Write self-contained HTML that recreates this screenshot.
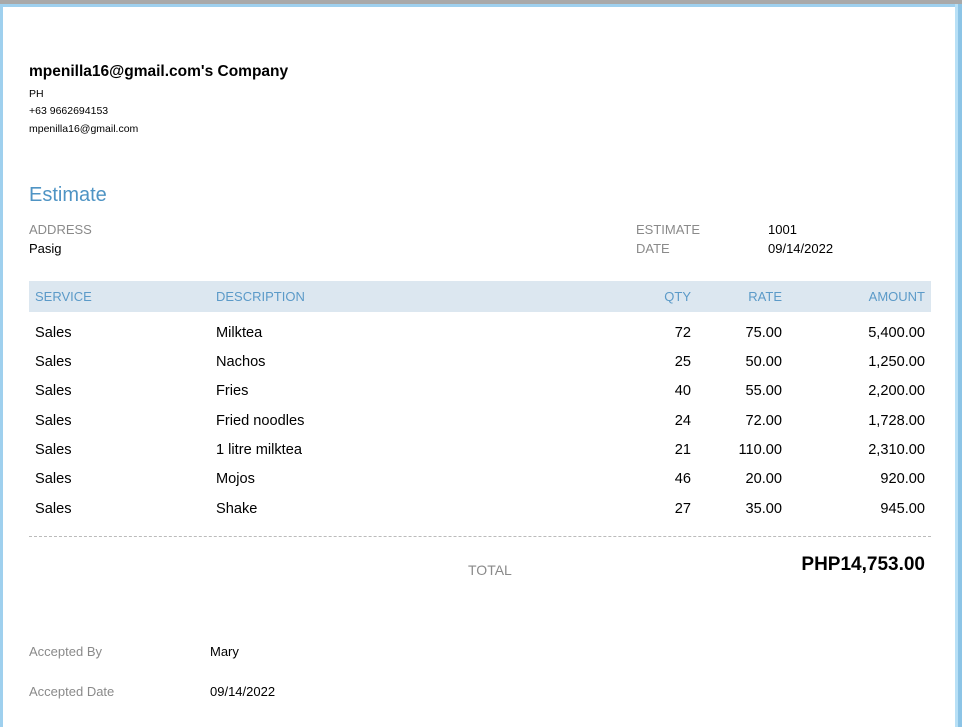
<!DOCTYPE html>
<html><head><style>
body{margin:0;width:962px;height:727px;overflow:hidden;background:#fff;font-family:"Liberation Sans",sans-serif;position:relative}
.t{position:absolute;white-space:nowrap}
.g{color:#8a8a8a;font-size:13px}
.h{color:#5b9ac8;font-size:13px}
.r{font-size:14.6px;color:#000}
.dk{font-size:13px;color:#000}
</style></head><body>
<div style="position:absolute;left:0;top:0;width:962px;height:4px;background:#a9a9a9"></div>
<div style="position:absolute;left:0;top:4px;width:962px;height:3px;background:#9fd0ee"></div>
<div style="position:absolute;left:0;top:4px;width:3px;height:723px;background:#9fd0ee"></div>
<div style="position:absolute;right:0;top:4px;width:4px;height:723px;background:#8cc4e6"></div>
<div style="position:absolute;right:4px;top:4px;width:3px;height:723px;background:#b8e0f6"></div>

<div class="t" style="left:29px;top:63px;font-size:15.5px;font-weight:bold">mpenilla16@gmail.com's Company</div>
<div class="t" style="left:29px;top:88px;font-size:10.5px">PH</div>
<div class="t" style="left:29px;top:105px;font-size:10.5px">+63 9662694153</div>
<div class="t" style="left:29px;top:123px;font-size:10.5px">mpenilla16@gmail.com</div>

<div class="t" style="left:29px;top:184px;font-size:20px;color:#4f94c4">Estimate</div>
<div class="t g" style="left:29px;top:222px">ADDRESS</div>
<div class="t dk" style="left:29px;top:241px">Pasig</div>
<div class="t g" style="left:636px;top:222px">ESTIMATE</div>
<div class="t g" style="left:636px;top:241px">DATE</div>
<div class="t dk" style="left:768px;top:222px">1001</div>
<div class="t dk" style="left:768px;top:241px">09/14/2022</div>

<div style="position:absolute;left:29px;top:281px;width:902px;height:31px;background:#dce7f0"></div>
<div class="t h" style="left:35px;top:289px">SERVICE</div>
<div class="t h" style="left:216px;top:289px">DESCRIPTION</div>
<div class="t h" style="right:271px;top:289px">QTY</div>
<div class="t h" style="right:180px;top:289px">RATE</div>
<div class="t h" style="right:37px;top:289px">AMOUNT</div>

<div class="t r" style="left:35px;top:325px">Sales</div><div class="t r" style="left:216px;top:325px">Milktea</div><div class="t r" style="right:271px;top:325px">72</div><div class="t r" style="right:180px;top:325px">75.00</div><div class="t r" style="right:37px;top:325px">5,400.00</div>
<div class="t r" style="left:35px;top:354px">Sales</div><div class="t r" style="left:216px;top:354px">Nachos</div><div class="t r" style="right:271px;top:354px">25</div><div class="t r" style="right:180px;top:354px">50.00</div><div class="t r" style="right:37px;top:354px">1,250.00</div>
<div class="t r" style="left:35px;top:383px">Sales</div><div class="t r" style="left:216px;top:383px">Fries</div><div class="t r" style="right:271px;top:383px">40</div><div class="t r" style="right:180px;top:383px">55.00</div><div class="t r" style="right:37px;top:383px">2,200.00</div>
<div class="t r" style="left:35px;top:413px">Sales</div><div class="t r" style="left:216px;top:413px">Fried noodles</div><div class="t r" style="right:271px;top:413px">24</div><div class="t r" style="right:180px;top:413px">72.00</div><div class="t r" style="right:37px;top:413px">1,728.00</div>
<div class="t r" style="left:35px;top:442px">Sales</div><div class="t r" style="left:216px;top:442px">1 litre milktea</div><div class="t r" style="right:271px;top:442px">21</div><div class="t r" style="right:180px;top:442px">110.00</div><div class="t r" style="right:37px;top:442px">2,310.00</div>
<div class="t r" style="left:35px;top:471px">Sales</div><div class="t r" style="left:216px;top:471px">Mojos</div><div class="t r" style="right:271px;top:471px">46</div><div class="t r" style="right:180px;top:471px">20.00</div><div class="t r" style="right:37px;top:471px">920.00</div>
<div class="t r" style="left:35px;top:501px">Sales</div><div class="t r" style="left:216px;top:501px">Shake</div><div class="t r" style="right:271px;top:501px">27</div><div class="t r" style="right:180px;top:501px">35.00</div><div class="t r" style="right:37px;top:501px">945.00</div>

<div style="position:absolute;left:29px;top:536px;width:902px;border-top:1px dashed #bbb"></div>
<div class="t" style="left:468px;top:562px;font-size:14px;color:#8a8a8a">TOTAL</div>
<div class="t" style="right:37px;top:554px;font-size:19px;font-weight:bold">PHP14,753.00</div>

<div class="t g" style="left:29px;top:644px">Accepted By</div>
<div class="t dk" style="left:210px;top:644px">Mary</div>
<div class="t g" style="left:29px;top:684px">Accepted Date</div>
<div class="t dk" style="left:210px;top:684px">09/14/2022</div>
</body></html>
